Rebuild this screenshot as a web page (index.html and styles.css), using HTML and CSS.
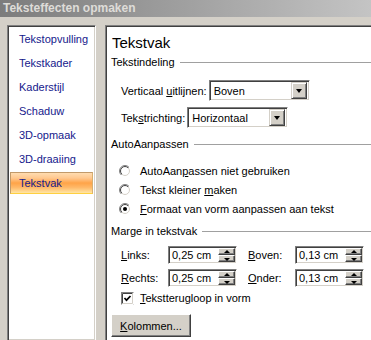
FILE: index.html
```html
<!DOCTYPE html>
<html lang="nl">
<head>
  <meta charset="UTF-8">
  <title>Teksteffecten opmaken</title>
  <link rel="stylesheet" href="styles.css">
</head>
<body>
  <div class="titlebar">Teksteffecten opmaken</div>

  <div class="dialog">
    <ul class="nav sunken">
      <li>Tekstopvulling</li>
      <li>Tekstkader</li>
      <li>Kaderstijl</li>
      <li>Schaduw</li>
      <li>3D-opmaak</li>
      <li>3D-draaiing</li>
      <li class="active">Tekstvak</li>
    </ul>

    <div class="pane sunken">
      <h1>Tekstvak</h1>

      <div class="group"><span>Tekstindeling</span><i></i></div>
      <div class="field first">
        <label>Verticaal <u>u</u>itlijnen:</label>
        <div class="select sunken"><span>Boven</span><b class="drop"></b></div>
      </div>
      <div class="field">
        <label>Tek<u>s</u>trichting:</label>
        <div class="select sunken"><span>Horizontaal</span><b class="drop"></b></div>
      </div>

      <div class="group auto"><span>AutoAanpassen</span><i></i></div>
      <div class="radio first">
        <svg width="12" height="12" viewBox="0 0 12 12">
          <defs>
            <linearGradient id="ring-out" x1="0" y1="0" x2="1" y2="1">
              <stop offset="0.5" stop-color="#808080"/>
              <stop offset="0.5" stop-color="#ffffff"/>
            </linearGradient>
            <linearGradient id="ring-in" x1="0" y1="0" x2="1" y2="1">
              <stop offset="0.5" stop-color="#404040"/>
              <stop offset="0.5" stop-color="#d4d0c8"/>
            </linearGradient>
          </defs>
          <circle cx="6" cy="6" r="5.5" fill="#fff" stroke="url(#ring-out)"/>
          <circle cx="6" cy="6" r="4.5" fill="none" stroke="url(#ring-in)"/>
        </svg>
        <span>AutoAan<u>p</u>assen niet gebruiken</span>
      </div>
      <div class="radio">
        <svg width="12" height="12" viewBox="0 0 12 12">
          <circle cx="6" cy="6" r="5.5" fill="#fff" stroke="url(#ring-out)"/>
          <circle cx="6" cy="6" r="4.5" fill="none" stroke="url(#ring-in)"/>
        </svg>
        <span>Tekst kleiner <u>m</u>aken</span>
      </div>
      <div class="radio">
        <svg width="12" height="12" viewBox="0 0 12 12">
          <circle cx="6" cy="6" r="5.5" fill="#fff" stroke="url(#ring-out)"/>
          <circle cx="6" cy="6" r="4.5" fill="none" stroke="url(#ring-in)"/>
          <circle cx="6" cy="6" r="2" fill="#000"/>
        </svg>
        <span><u>F</u>ormaat van vorm aanpassen aan tekst</span>
      </div>

      <div class="group marge"><span>Marge in tekstvak</span><i></i></div>
      <div class="margins">
        <label><u>L</u>inks:</label>
        <div class="spin sunken"><span>0,25 cm</span><b class="arrows"><em class="up"></em><em class="down"></em></b></div>
        <label class="right"><u>B</u>oven:</label>
        <div class="spin sunken"><span>0,13 cm</span><b class="arrows"><em class="up"></em><em class="down"></em></b></div>
        <label><u>R</u>echts:</label>
        <div class="spin sunken"><span>0,25 cm</span><b class="arrows"><em class="up"></em><em class="down"></em></b></div>
        <label class="right"><u>O</u>nder:</label>
        <div class="spin sunken"><span>0,13 cm</span><b class="arrows"><em class="up"></em><em class="down"></em></b></div>
      </div>

      <div class="check">
        <svg class="box" width="13" height="13" viewBox="0 0 13 13">
          <rect x="0.5" y="0.5" width="12" height="12" fill="#fff" stroke="#808080"/>
          <path d="M1.5 11.5V1.5H11.5" fill="none" stroke="#404040"/>
          <path d="M12.5 0.5V12.5H0.5" fill="none" stroke="#fff"/>
          <path d="M11.5 1.5V11.5H1.5" fill="none" stroke="#d4d0c8"/>
          <polyline points="3.5,6 5.5,8.2 9.5,4" fill="none" stroke="#000" stroke-width="1.7"/>
        </svg>
        <span><u>T</u>ekstterugloop in vorm</span>
      </div>

      <button class="btn"><u>K</u>olommen...</button>
    </div>
  </div>
</body>
</html>
```

FILE: styles.css
```css
html, body {
  height: 100%;
}
body {
  margin: 0;
  display: flex;
  flex-direction: column;
  background: #d4d0c8;
  font-family: 'Liberation Sans', Arial, sans-serif;
  font-size: 11px;
  color: #000;
  overflow: hidden;
}
.titlebar {
  height: 17px;
  line-height: 17px;
  padding-left: 3px;
  background: linear-gradient(to right, #7c7c7c, #c4c4c4);
  color: #dedcd8;
  font-weight: bold;
  font-size: 12px;
}
.dialog {
  flex: 1;
  display: flex;
  gap: 9px;
  padding: 8px 0 0 7px;
  min-height: 0;
}
.sunken {
  box-sizing: border-box;
  border: 1px solid;
  border-color: #808080 #fff #fff #808080;
  box-shadow: inset 1px 1px #404040, inset -1px -1px #d4d0c8;
  background: #fff;
}

/* left list */
.nav {
  list-style: none;
  margin: 0;
  padding: 2px 2px 0;
  width: 89px;
  flex-shrink: 0;
  border-bottom: 0;
}
.nav li {
  height: 22px;
  line-height: 22px;
  padding-left: 9px;
  margin-bottom: 2px;
  color: #15208c;
}
.nav li.active {
  box-sizing: border-box;
  line-height: 20px;
  padding-left: 8px;
  border: 1px solid;
  border-color: #c29a6a #d8b070 #ffd040 #c29a6a;
  background: linear-gradient(#ffdcb0 0%, #ffc890 25%, #ffa448 50%, #ffb868 72%, #ffe6a4 100%);
}

/* right pane */
.pane {
  flex: 1;
  padding: 8px 0 0 5px;
  border-right: 0;
  border-bottom: 0;
  box-shadow: inset 1px 1px #404040;
}
.pane h1 {
  margin: 0;
  height: 18px;
  line-height: 18px;
  font-size: 15px;
  font-weight: normal;
  padding-left: 1px;
}
.group {
  display: flex;
  align-items: center;
  height: 13px;
  line-height: 13px;
  margin-top: 4px;
}
.group i {
  flex: 1;
  height: 1px;
  margin-left: 5px;
  background: #a0a0a0;
}
.group.auto {
  margin-top: 10px;
}
.group.marge {
  margin-top: 7px;
}

.field {
  display: flex;
  align-items: center;
  gap: 2px;
  height: 21px;
  margin: 6px 0 0 10px;
}
.field.first {
  margin-top: 11px;
}
.select {
  display: flex;
  align-items: center;
  width: 101px;
  height: 21px;
  padding: 2px;
}
.select span {
  flex: 1;
  padding-left: 2px;
}
.drop {
  position: relative;
  width: 16px;
  height: 17px;
  box-sizing: border-box;
  background: #d4d0c8;
  border: 1px solid;
  border-color: #d4d0c8 #404040 #404040 #d4d0c8;
  box-shadow: inset 1px 1px #fff, inset -1px -1px #808080;
}
.drop::after {
  content: "";
  position: absolute;
  left: 4px;
  top: 6px;
  border-style: solid;
  border-width: 4px 3.5px 0;
  border-color: #000 transparent transparent;
}

.radio {
  display: flex;
  align-items: center;
  gap: 9px;
  height: 19px;
  margin-left: 8px;
}
.radio.first {
  margin-top: 10px;
}

.margins {
  display: grid;
  grid-template-columns: 47px 69px 58px 69px;
  row-gap: 5px;
  margin: 8px 0 0 10px;
}
.margins label {
  display: flex;
  align-items: center;
}
.margins label.right {
  padding-left: 11px;
}
.spin {
  display: flex;
  align-items: center;
  height: 18px;
  padding: 2px 1px 2px 2px;
}
.spin span {
  flex: 1;
  padding-left: 1px;
}
.arrows {
  display: flex;
  flex-direction: column;
  width: 17px;
  height: 14px;
}
.arrows em {
  position: relative;
  flex: 1;
  box-sizing: border-box;
  background: #d4d0c8;
  border: 1px solid;
  border-color: #fff #404040 #404040 #fff;
  box-shadow: inset -1px -1px #808080;
}
.arrows em::after {
  content: "";
  position: absolute;
  left: 5px;
  border-style: solid;
  border-color: transparent;
}
.arrows .up::after {
  top: 1px;
  border-width: 0 3px 3px;
  border-bottom-color: #000;
}
.arrows .down::after {
  top: 2px;
  border-width: 3px 3px 0;
  border-top-color: #000;
}

.check {
  display: flex;
  align-items: center;
  gap: 6px;
  height: 14px;
  margin: 4px 0 0 10px;
}
.box {
  flex-shrink: 0;
}

.btn {
  display: block;
  width: 80px;
  height: 23px;
  margin-top: 9px;
  padding: 0;
  font: inherit;
  color: #000;
  background: #d4d0c8;
  border: 1px solid;
  border-color: #fff #404040 #404040 #fff;
  box-shadow: inset -1px -1px #808080;
}
```
